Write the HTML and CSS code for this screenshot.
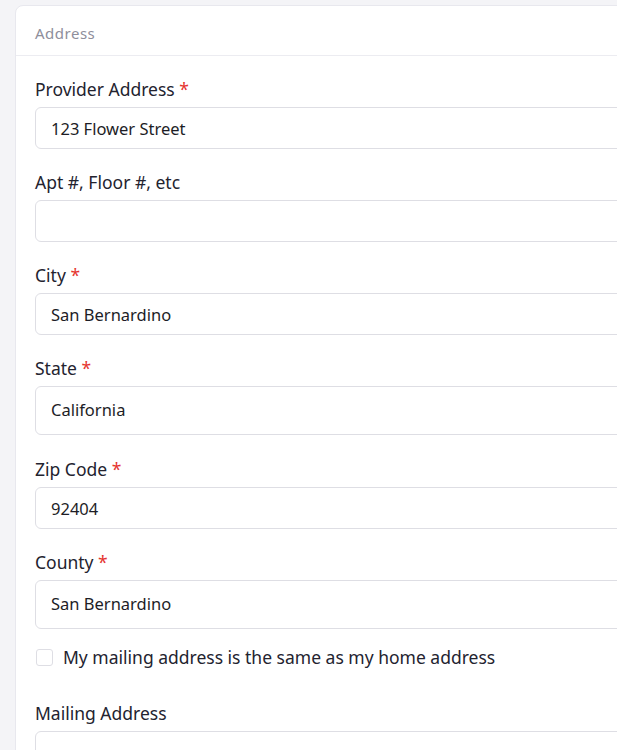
FILE: index.html
```html
<!DOCTYPE html>
<html lang="en">
<head>
    <meta charset="UTF-8">
    <meta name="viewport" content="width=device-width, initial-scale=1.0">
    <title>Address</title>
    <link rel="stylesheet" href="styles.css">
</head>
<body>
    <div class="card">
        <div class="card-header">Address</div>
        <form class="card-body">
            <div class="field">
                <label for="address">Provider Address <span class="req">*</span></label>
                <input type="text" id="address" value="123 Flower Street">
            </div>
            <div class="field">
                <label for="apt">Apt #, Floor #, etc</label>
                <input type="text" id="apt">
            </div>
            <div class="field">
                <label for="city">City <span class="req">*</span></label>
                <input type="text" id="city" value="San Bernardino">
            </div>
            <div class="field tall">
                <label for="state">State <span class="req">*</span></label>
                <div class="select">California</div>
            </div>
            <div class="field">
                <label for="zip">Zip Code <span class="req">*</span></label>
                <input type="text" id="zip" value="92404">
            </div>
            <div class="field tall">
                <label for="county">County <span class="req">*</span></label>
                <div class="select">San Bernardino</div>
            </div>
            <label class="check">
                <span class="box"></span>
                My mailing address is the same as my home address
            </label>
            <div class="field mailing">
                <label for="mailing">Mailing Address</label>
                <input type="text" id="mailing">
            </div>
        </form>
    </div>
</body>
</html>
```

FILE: styles.css
```css
body {
    font-family: "Noto Sans", "Open Sans", sans-serif;
    background-color: #f4f4f7;
    color: #23232f;
    margin: 0;
    padding: 5px 0 0 15px;
    overflow: hidden;
}
.card {
    width: 700px;
    background-color: #fff;
    border: 1px solid #e8e8ee;
    border-radius: 8px;
    min-height: 800px;
}
.card-header {
    height: 49px;
    line-height: 55px;
    padding: 0 19px;
    font-size: 15px;
    letter-spacing: 0.5px;
    color: #8e8e9b;
    border-bottom: 1px solid #ececf1;
}
.card-body {
    padding: 21px 19px;
}
.field {
    margin-bottom: 21px;
}
.field.tall {
    margin-bottom: 22px;
}
.field label {
    display: block;
    font-size: 17.5px;
    line-height: 24px;
    margin-bottom: 6px;
}
.req {
    color: #e5342f;
}
input[type="text"],
.select {
    display: block;
    width: 100%;
    height: 42px;
    padding: 0 15px;
    font-family: inherit;
    font-size: 16.5px;
    color: #1d1d26;
    border: 1px solid #dedee4;
    border-radius: 6px;
    box-sizing: border-box;
}
.select {
    height: 49px;
    line-height: 45px;
}
.check {
    display: flex;
    align-items: center;
    gap: 10px;
    font-size: 17.5px;
    line-height: 24px;
    margin-top: -6px;
}
.box {
    width: 15px;
    height: 15px;
    border: 1px solid #dedee4;
    border-radius: 3px;
    margin-left: 1px;
}
.mailing {
    margin-top: 32px;
}
```
